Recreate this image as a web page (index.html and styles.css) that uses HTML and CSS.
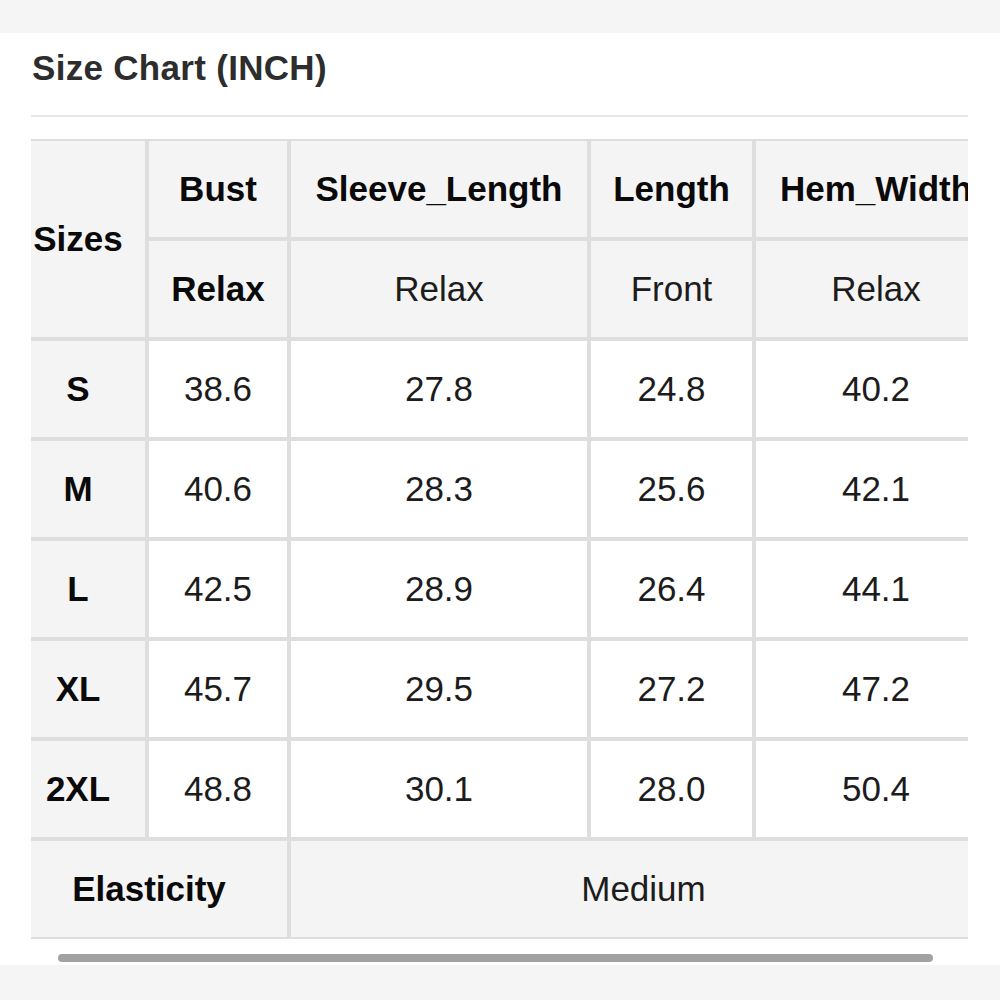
FILE: index.html
```html
<!DOCTYPE html>
<html lang="en">
<head>
<meta charset="utf-8">
<title>Size Chart</title>
<link rel="stylesheet" href="styles.css">
</head>
<body>
<div class="card">
  <h2 class="title">Size Chart (INCH)</h2>
  <div class="divider"></div>
  <div class="scroller">
    <table class="chart">
      <colgroup>
        <col class="c-size">
        <col class="c-bust">
        <col class="c-sleeve">
        <col class="c-length">
        <col class="c-hem">
      </colgroup>
      <thead>
        <tr>
          <th rowspan="2" class="head">Sizes</th>
          <th class="head">Bust</th>
          <th class="head">Sleeve_Length</th>
          <th class="head">Length</th>
          <th class="head">Hem_Width</th>
        </tr>
        <tr>
          <th class="head">Relax</th>
          <td class="head sub">Relax</td>
          <td class="head sub">Front</td>
          <td class="head sub">Relax</td>
        </tr>
      </thead>
      <tbody>
        <tr><th class="head">S</th><td>38.6</td><td>27.8</td><td>24.8</td><td>40.2</td></tr>
        <tr><th class="head">M</th><td>40.6</td><td>28.3</td><td>25.6</td><td>42.1</td></tr>
        <tr><th class="head">L</th><td>42.5</td><td>28.9</td><td>26.4</td><td>44.1</td></tr>
        <tr><th class="head">XL</th><td>45.7</td><td>29.5</td><td>27.2</td><td>47.2</td></tr>
        <tr><th class="head">2XL</th><td>48.8</td><td>30.1</td><td>28.0</td><td>50.4</td></tr>
        <tr><th class="head" colspan="2">Elasticity</th><td class="head sub" colspan="3">Medium</td></tr>
      </tbody>
    </table>
  </div>
  <div class="scrollbar"><div class="thumb"></div></div>
</div>
</body>
</html>
```

FILE: styles.css
```css
html, body {
  margin: 0;
  padding: 0;
}
body {
  background: #f5f5f5;
  font-family: "Liberation Sans", Arial, Helvetica, sans-serif;
  width: 1000px;
  height: 1000px;
  overflow: hidden;
}
.card {
  margin-top: 33px;
  background: #ffffff;
  height: 932px;
  padding: 15px 0 0 31px;
  box-sizing: border-box;
}
.title {
  margin: 0 0 0 1px;
  font-size: 35px;
  line-height: 40px;
  font-weight: 700;
  color: #2d2d2d;
  letter-spacing: 0.3px;
}
.divider {
  margin-top: 27px;
  width: 937px;
  height: 2px;
  background: #e7e7e7;
}
.scroller {
  margin-top: 22px;
  width: 937px;
  overflow: hidden;
}
.chart {
  margin-left: -22px;
  border-collapse: separate;
  border-spacing: 0;
  table-layout: fixed;
  width: 989px;
}
.c-size { width: 138px; }
.c-bust { width: 142px; }
.c-sleeve { width: 300px; }
.c-length { width: 165px; }
.c-hem { width: 244px; }
.chart th,
.chart td {
  box-sizing: border-box;
  height: 100px;
  padding: 0;
  border: 2px solid #dedede;
  text-align: center;
  vertical-align: middle;
  font-size: 35px;
  white-space: nowrap;
  background: #ffffff;
  color: #1c1c1c;
  font-weight: 400;
}
.chart th.head,
.chart td.head {
  background: #f4f4f4;
}
.chart th {
  font-weight: 700;
  color: #0a0a0a;
}
.chart td.sub {
  font-weight: 400;
  color: #1c1c1c;
}
.scrollbar {
  margin: 15px 0 0 27px;
  width: 875px;
}
.thumb {
  height: 8px;
  border-radius: 4px;
  background: #a2a2a2;
}
```
